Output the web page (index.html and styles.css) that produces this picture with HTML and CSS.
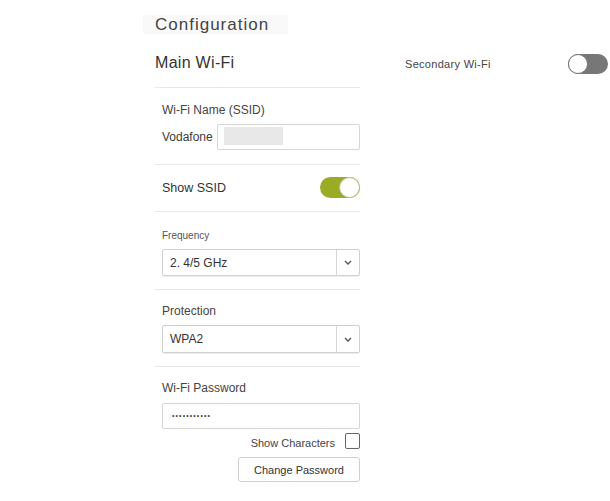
FILE: index.html
```html
<!DOCTYPE html>
<html>
<head>
    <title>Configuration</title>
    <meta charset="utf-8">
    <link rel="stylesheet" href="styles.css">
</head>
<body>

<div class="page">
    <div class="title">Configuration</div>

    <div class="columns">
        <div class="main">
            <div class="main-heading">Main Wi-Fi</div>

            <div class="section ssid">
                <div class="label">Wi-Fi Name (SSID)</div>
                <div class="ssid-row">
                    <span class="ssid-prefix">Vodafone</span>
                    <div class="input ssid-input"><span class="mask"></span></div>
                </div>
            </div>

            <div class="section show-ssid">
                <span class="label-big">Show SSID</span>
                <span class="toggle on"><span class="knob"></span></span>
            </div>

            <div class="section frequency">
                <div class="label small">Frequency</div>
                <div class="select">
                    <span class="select-value">2. 4/5 GHz</span>
                    <span class="select-arrow">
                        <svg width="8" height="5" viewBox="0 0 8 5"><polyline points="1,1 4,4 7,1" fill="none" stroke="#555" stroke-width="1.4"/></svg>
                    </span>
                </div>
            </div>

            <div class="section protection">
                <div class="label">Protection</div>
                <div class="select tall">
                    <span class="select-value">WPA2</span>
                    <span class="select-arrow">
                        <svg width="8" height="5" viewBox="0 0 8 5"><polyline points="1,1 4,4 7,1" fill="none" stroke="#555" stroke-width="1.4"/></svg>
                    </span>
                </div>
            </div>

            <div class="section password">
                <div class="label">Wi-Fi Password</div>
                <div class="input pass-input">&bull;&bull;&bull;&bull;&bull;&bull;&bull;&bull;&bull;&bull;&bull;</div>
                <div class="show-chars">
                    <span>Show Characters</span>
                    <span class="checkbox"></span>
                </div>
                <div class="btn-row">
                    <button class="btn">Change Password</button>
                </div>
            </div>
        </div>

        <div class="secondary">
            <span class="secondary-label">Secondary Wi-Fi</span>
            <span class="toggle off"><span class="knob"></span></span>
        </div>
    </div>
</div>

</body>
</html>
```

FILE: styles.css
```css
body, html {
    margin: 0; padding: 0;
    background: #fff;
}
body {
    font-family: 'Liberation Sans', Arial, sans-serif;
    color: #3a3a3a;
}
.page {
    padding: 15px 0 0 155px;
}
.title {
    font-size: 17px;
    line-height: 19px;
    height: 19px;
    letter-spacing: 1px;
    color: #444;
    background: #f9f9f9;
    width: 133px;
    margin-left: -12px;
    padding-left: 12px;
}
.columns {
    display: flex;
    margin-top: 19px;
}
.main {
    width: 205px;
}
.main-heading {
    font-size: 16px;
    line-height: 20px;
    height: 22px;
    padding-bottom: 12px;
    letter-spacing: 0.3px;
    border-bottom: 1px solid #e8e8e8;
    color: #333;
}
.section {
    padding: 13px 0 13px 7px;
    border-bottom: 1px solid #e8e8e8;
}
.section:last-child {
    border-bottom: none;
}
.label {
    font-size: 12px;
    line-height: 16px;
    color: #444;
}
.label.small {
    font-size: 10px;
    line-height: 14px;
    color: #555;
}
.label-big {
    font-size: 12.5px;
    color: #333;
}
.ssid {
    padding-top: 14px;
    padding-bottom: 14px;
}
.ssid-row {
    display: flex;
    align-items: center;
    margin-top: 6px;
}
.ssid-prefix {
    font-size: 12px;
    width: 55px;
    color: #3a3a3a;
}
.input {
    box-sizing: border-box;
    height: 26px;
    border: 1px solid #d6d6d6;
    border-radius: 2px;
}
.ssid-input {
    flex: 1;
    padding: 2px 6px;
}
.mask {
    display: block;
    width: 59px;
    height: 18px;
    background: #e8e8e8;
}
.show-ssid {
    display: flex;
    justify-content: space-between;
    align-items: center;
    padding-top: 12px;
    padding-bottom: 13px;
}
.toggle {
    position: relative;
    display: block;
    box-sizing: border-box;
    width: 40px;
    height: 21px;
    border-radius: 11px;
}
.toggle .knob {
    position: absolute;
    top: 0;
    width: 21px;
    height: 21px;
    box-sizing: border-box;
    border-radius: 50%;
    background: #fff;
    border: 1px solid #9a9a9a;
}
.toggle.on {
    background: #9aab26;
}
.toggle.on .knob {
    right: 0;
    border-color: #b9bd8a;
}
.toggle.off {
    background: #777;
    height: 20px;
}
.toggle.off .knob {
    left: 0;
    width: 20px;
    height: 20px;
    border-color: #777;
}
.frequency {
    padding-top: 17px;
    padding-bottom: 13px;
}
.select {
    display: flex;
    box-sizing: border-box;
    height: 27px;
    margin-top: 6px;
    border: 1px solid #d0d0d0;
    border-radius: 2px;
    box-shadow: 0 1px 1px #eee;
}
.select.tall {
    height: 28px;
}
.select-value {
    flex: 1;
    display: flex;
    align-items: center;
    padding-left: 7px;
    font-size: 12px;
    color: #333;
}
.select-arrow {
    width: 22px;
    display: flex;
    align-items: center;
    justify-content: center;
    border-left: 1px solid #d6d6d6;
}
.password {
    padding-bottom: 18px;
}
.pass-input {
    margin-top: 7px;
    padding-left: 9px;
    font-size: 7px;
    line-height: 24px;
    letter-spacing: 1.1px;
    color: #444;
}
.show-chars {
    display: flex;
    justify-content: flex-end;
    align-items: center;
    gap: 10px;
    margin-top: 4px;
    font-size: 11px;
    color: #444;
}
.show-chars span:first-child {
    padding-top: 4px;
}
.checkbox {
    display: block;
    width: 13px;
    height: 14px;
    border: 1px solid #666;
    border-radius: 2px;
}
.btn-row {
    display: flex;
    justify-content: flex-end;
    margin-top: 8px;
}
.btn {
    width: 122px;
    height: 25px;
    padding: 0;
    font-family: 'Liberation Sans', Arial, sans-serif;
    font-size: 11px;
    color: #333;
    background: #fff;
    border: 1px solid #cfcfcf;
    border-radius: 3px;
}
.secondary {
    display: flex;
    justify-content: space-between;
    align-items: center;
    height: 22px;
    width: 203px;
    margin-left: 45px;
}
.secondary-label {
    font-size: 11px;
    letter-spacing: 0.3px;
    color: #444;
}
```
